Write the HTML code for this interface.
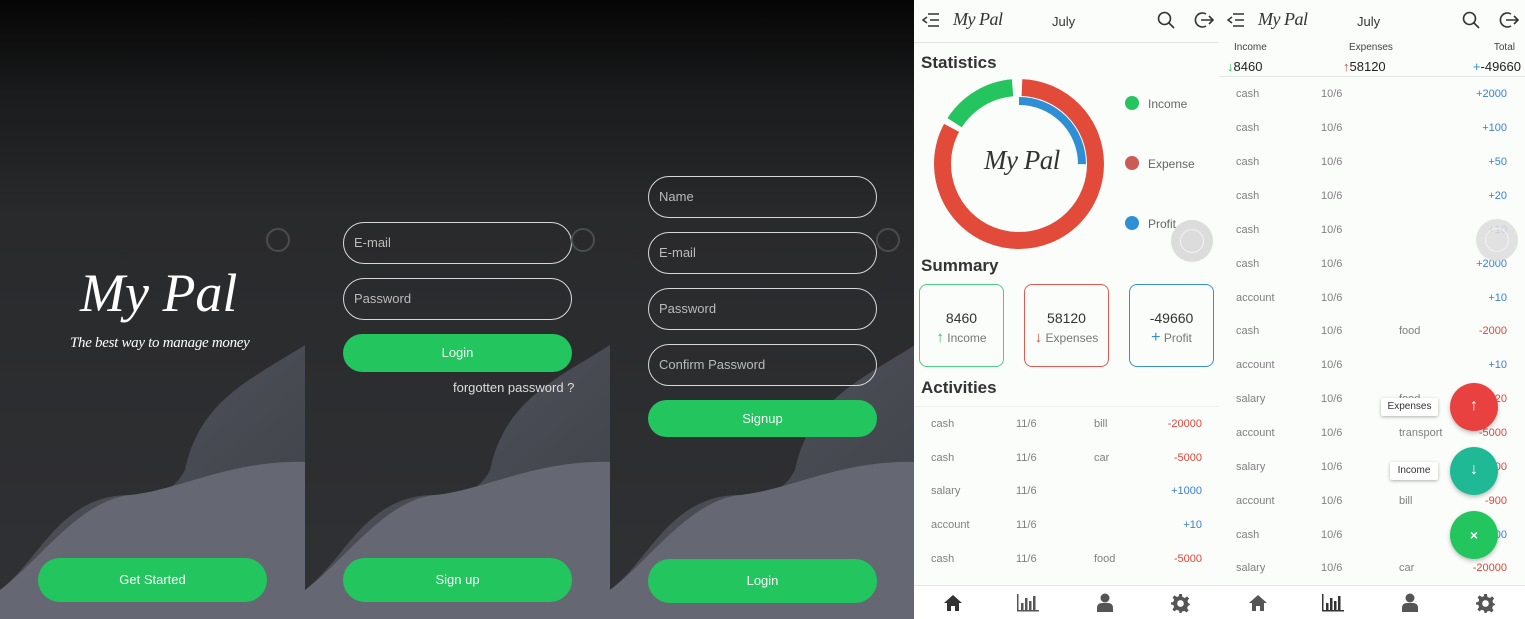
<!DOCTYPE html>
<html><head><meta charset="utf-8"><style>
*{margin:0;padding:0;box-sizing:border-box}
body{width:1525px;height:619px;overflow:hidden;background:#fff;font-family:"Liberation Sans",Roboto,sans-serif;position:relative}
.p{position:absolute;top:0;height:619px;overflow:hidden}
.dark{width:305px;background:linear-gradient(180deg,#050505 0%,#1a1b1c 15%,#292a2c 35%,#303134 100%)}
.a{position:absolute}
.btn{position:absolute;background:#22c55e;border-radius:22px;color:#f3fff6;font-size:13px;text-align:center}
.inp{position:absolute;border:1.5px solid #d8d8d8;border-radius:22px;color:#bbb;font-size:13px;padding-left:10px}
.ring{position:absolute;width:24px;height:24px;border:2px solid #4a4c4f;border-radius:50%}
.script{font-family:"Liberation Serif",serif;font-style:italic}
.light{background:#fafdfa;width:305px}
.t{position:absolute;font-size:11px;color:#808080}
.pos{color:#3b7fd6}.neg{color:#e0453b}
</style></head><body>

<!-- Panel 1 -->
<div class="p dark" style="left:0">
<svg class="a" style="left:0;top:0" width="305" height="619"><defs><linearGradient id="g1" x1="0" y1="0" x2="1" y2="1"><stop offset="0" stop-color="#555862"/><stop offset="1" stop-color="#3c3e44"/></linearGradient></defs><path d="M305 345 C250 380,200 400,185 470 C170 500,140 495,130 495 C60 495,40 560,0 590 L0 619 L305 619Z" fill="url(#g1)"/><path d="M305 462 C230 460,180 490,130 495 C80 500,40 560,0 590 L0 619 L305 619Z" fill="#656872"/></svg>
<div class="a script" style="left:80px;top:262px;font-size:54px;color:#fff">My Pal</div>
<div class="a script" style="left:70px;top:335px;font-size:15px;color:#fff;letter-spacing:-0.3px">The best way to manage money</div>
<div class="ring" style="left:266px;top:228px"></div>
<div class="btn" style="left:38px;top:558px;width:229px;height:44px;line-height:44px">Get Started</div>
</div>

<!-- Panel 2 -->
<div class="p dark" style="left:305px">
<svg class="a" style="left:0;top:0" width="305" height="619"><path d="M305 345 C250 380,200 400,185 470 C170 500,140 495,130 495 C60 495,40 560,0 590 L0 619 L305 619Z" fill="url(#g1)"/><path d="M305 462 C230 460,180 490,130 495 C80 500,40 560,0 590 L0 619 L305 619Z" fill="#656872"/></svg>
<div class="inp" style="left:38px;top:222px;width:229px;height:42px;line-height:40px">E-mail</div>
<div class="inp" style="left:38px;top:278px;width:229px;height:42px;line-height:40px">Password</div>
<div class="btn" style="left:38px;top:334px;width:229px;height:38px;line-height:38px">Login</div>
<div class="a" style="left:148px;top:380px;font-size:13px;color:#ddd">forgotten password ?</div>
<div class="ring" style="left:266px;top:228px"></div>
<div class="btn" style="left:38px;top:558px;width:229px;height:44px;line-height:44px">Sign up</div>
</div>

<!-- Panel 3 -->
<div class="p dark" style="left:610px;width:304px">
<svg class="a" style="left:0;top:0" width="305" height="619"><path d="M305 345 C250 380,200 400,185 470 C170 500,140 495,130 495 C60 495,40 560,0 590 L0 619 L305 619Z" fill="url(#g1)"/><path d="M305 462 C230 460,180 490,130 495 C80 500,40 560,0 590 L0 619 L305 619Z" fill="#656872"/></svg>
<div class="inp" style="left:38px;top:176px;width:229px;height:42px;line-height:40px">Name</div>
<div class="inp" style="left:38px;top:232px;width:229px;height:42px;line-height:40px">E-mail</div>
<div class="inp" style="left:38px;top:288px;width:229px;height:42px;line-height:40px">Password</div>
<div class="inp" style="left:38px;top:344px;width:229px;height:42px;line-height:40px">Confirm Password</div>
<div class="btn" style="left:38px;top:400px;width:229px;height:37px;line-height:37px">Signup</div>
<div class="ring" style="left:266px;top:228px"></div>
<div class="btn" style="left:38px;top:559px;width:229px;height:44px;line-height:44px">Login</div>
</div>

<!-- Panel 4 -->
<div class="p light" style="left:914px">
<svg class="a" style="left:8px;top:12px" width="18" height="16" fill="none" stroke="#333" stroke-width="1.5"><path d="M6 2H17M8 8H17M6 14H17M5 5L1 8L5 11"/></svg>
<div class="a script" style="left:39px;top:9px;font-size:18px;color:#333;letter-spacing:-0.5px">My Pal</div>
<div class="a" style="left:138px;top:14px;font-size:13px;color:#333">July</div>
<svg class="a" style="left:243px;top:11px" width="18" height="18" fill="none" stroke="#333" stroke-width="1.6"><circle cx="7.5" cy="7.5" r="6"/><path d="M12 12L17 17"/></svg>
<svg class="a" style="left:280px;top:11px" width="20" height="18" fill="none" stroke="#333" stroke-width="1.6"><path d="M12 3A7 7 0 1 0 12 15"/><path d="M7 9H19M15 5L19 9L15 13"/></svg>
<div class="a" style="left:0;top:42px;width:305px;height:1px;background:#e3e5e3"></div>
<div class="a" style="left:7px;top:53px;font-size:17px;font-weight:bold;color:#333">Statistics</div>
<svg class="a" style="left:19px;top:78px" width="172" height="172">
<g transform="rotate(-90 86 86)" fill="none">
<circle cx="86" cy="86" r="76.5" stroke="#e24b39" stroke-width="17" stroke-dasharray="395 86" stroke-dashoffset="-3"/>
<circle cx="86" cy="86" r="76.5" stroke="#24c45f" stroke-width="17" stroke-dasharray="70 411" stroke-dashoffset="-404"/>
<circle cx="86" cy="86" r="63" stroke="#2f8fd6" stroke-width="8" stroke-dasharray="99 300"/>
</g></svg>
<div class="a script" style="left:70px;top:145px;font-size:27px;color:#333;letter-spacing:-0.5px">My Pal</div>
<div class="a" style="left:211px;top:96px;width:14px;height:14px;border-radius:50%;background:#24c45f"></div>
<div class="a" style="left:234px;top:97px;font-size:12px;color:#666">Income</div>
<div class="a" style="left:211px;top:156px;width:14px;height:14px;border-radius:50%;background:#cc5a55"></div>
<div class="a" style="left:234px;top:157px;font-size:12px;color:#666">Expense</div>
<div class="a" style="left:211px;top:216px;width:14px;height:14px;border-radius:50%;background:#2f8fd6"></div>
<div class="a" style="left:234px;top:217px;font-size:12px;color:#666">Profit</div>
<div class="a" style="left:257px;top:220px;width:42px;height:42px;border-radius:50%;background:#dcdcdc"></div>
<div class="a" style="left:266px;top:229px;width:24px;height:24px;border-radius:50%;border:1.5px solid #f3f3f3"></div>
<div class="a" style="left:7px;top:256px;font-size:17px;font-weight:bold;color:#333">Summary</div>
<div class="a" style="left:5px;top:284px;width:85px;height:83px;border:1px solid #4ccc85;border-radius:8px;text-align:center"><div style="margin-top:25px;font-size:14px;color:#333">8460</div><div style="font-size:12px;color:#777;margin-top:3px"><span style="color:#24c45f;font-size:15px">↑</span> Income</div></div>
<div class="a" style="left:110px;top:284px;width:85px;height:83px;border:1px solid #e05a50;border-radius:8px;text-align:center"><div style="margin-top:25px;font-size:14px;color:#333">58120</div><div style="font-size:12px;color:#777;margin-top:3px"><span style="color:#e24b39;font-size:15px">↓</span> Expenses</div></div>
<div class="a" style="left:215px;top:284px;width:85px;height:83px;border:1px solid #3a8fd0;border-radius:8px;text-align:center"><div style="margin-top:25px;font-size:14px;color:#333">-49660</div><div style="font-size:12px;color:#777;margin-top:3px"><span style="color:#2f8fd6;font-size:16px">+</span> Profit</div></div>
<div class="a" style="left:7px;top:378px;font-size:17px;font-weight:bold;color:#333">Activities</div>
<div class="a" style="left:0;top:406px;width:305px;height:1px;background:#eee"></div>
<div class="t" style="left:17px;top:418px">cash</div><div class="t" style="left:102px;top:418px">11/6</div><div class="t" style="left:180px;top:418px">bill</div><div class="t neg" style="right:17px;top:418px">-20000</div>
<div class="t" style="left:17px;top:452px">cash</div><div class="t" style="left:102px;top:452px">11/6</div><div class="t" style="left:180px;top:452px">car</div><div class="t neg" style="right:17px;top:452px">-5000</div>
<div class="t" style="left:17px;top:485px">salary</div><div class="t" style="left:102px;top:485px">11/6</div><div class="t pos" style="right:17px;top:485px">+1000</div>
<div class="t" style="left:17px;top:519px">account</div><div class="t" style="left:102px;top:519px">11/6</div><div class="t pos" style="right:17px;top:519px">+10</div>
<div class="t" style="left:17px;top:553px">cash</div><div class="t" style="left:102px;top:553px">11/6</div><div class="t" style="left:180px;top:553px">food</div><div class="t neg" style="right:17px;top:553px">-5000</div>
<div class="a" style="left:0;top:585px;width:305px;height:34px;background:#fff;border-top:1px solid #e5e5e5"></div>
<svg class="a" style="left:29px;top:594px" width="20" height="18" fill="#333"><path d="M10 1L1 9H4V17H8V12H12V17H16V9H19Z"/></svg>
<svg class="a" style="left:103px;top:594px" width="22" height="18" fill="#555"><rect x="0" y="0" width="1.5" height="17"/><rect x="0" y="16" width="22" height="1.5"/><rect x="4" y="9" width="2.5" height="7"/><rect x="8" y="4" width="2.5" height="12"/><rect x="12" y="7" width="2.5" height="9"/><rect x="16" y="2" width="2.5" height="14"/></svg>
<svg class="a" style="left:183px;top:593px" width="16" height="20" fill="#555"><circle cx="8" cy="5" r="4.5"/><path d="M0 19V15Q0 10 5 10H11Q16 10 16 15V19Z"/></svg>
<svg class="a" style="left:257px;top:594px" width="19" height="19" viewBox="0 0 20 20" fill="#555"><path d="M8.5 0H11.5L12 3L14.5 4.2L17 2.5L19 4.8L17.3 7.2L18 9.5L20 10.5V11.5L17.8 12.5L17 15L18.5 17.3L16.5 19.3L14 17.7L11.5 18.6L11 20H9L8.5 17.6L6 16.6L3.5 18.3L1.5 16.3L3.2 13.8L2.4 11.5L0 11V9L2.5 8.3L3.3 6L1.7 3.5L3.7 1.5L6.2 3.2L8.3 2.4Z"/><circle cx="10" cy="10" r="3.5" fill="#fff"/></svg>
</div>

<!-- Panel 5 -->
<div class="p light" style="left:1219px;width:306px">
<svg class="a" style="left:8px;top:12px" width="18" height="16" fill="none" stroke="#333" stroke-width="1.5"><path d="M6 2H17M8 8H17M6 14H17M5 5L1 8L5 11"/></svg>
<div class="a script" style="left:39px;top:9px;font-size:18px;color:#333;letter-spacing:-0.5px">My Pal</div>
<div class="a" style="left:138px;top:14px;font-size:13px;color:#333">July</div>
<svg class="a" style="left:243px;top:11px" width="18" height="18" fill="none" stroke="#333" stroke-width="1.6"><circle cx="7.5" cy="7.5" r="6"/><path d="M12 12L17 17"/></svg>
<svg class="a" style="left:280px;top:11px" width="20" height="18" fill="none" stroke="#333" stroke-width="1.6"><path d="M12 3A7 7 0 1 0 12 15"/><path d="M7 9H19M15 5L19 9L15 13"/></svg>
<div class="a" style="left:15px;top:42px;font-size:10px;color:#444">Income</div>
<div class="a" style="left:130px;top:42px;font-size:10px;color:#444">Expenses</div>
<div class="a" style="right:10px;top:42px;font-size:10px;color:#444">Total</div>
<div class="a" style="left:8px;top:59px;font-size:13px;color:#222"><span style="color:#24c45f">↓</span>8460</div>
<div class="a" style="left:124px;top:59px;font-size:13px;color:#222"><span style="color:#e24b39">↑</span>58120</div>
<div class="a" style="right:4px;top:59px;font-size:13px;color:#222"><span style="color:#2f8fd6">+</span>-49660</div>
<div class="a" style="left:0;top:76px;width:306px;height:1px;background:#e3e5e3"></div>
<div class="t" style="left:17px;top:88px">cash</div><div class="t" style="left:102px;top:88px">10/6</div><div class="t pos" style="right:18px;top:88px">+2000</div>
<div class="t" style="left:17px;top:122px">cash</div><div class="t" style="left:102px;top:122px">10/6</div><div class="t pos" style="right:18px;top:122px">+100</div>
<div class="t" style="left:17px;top:156px">cash</div><div class="t" style="left:102px;top:156px">10/6</div><div class="t pos" style="right:18px;top:156px">+50</div>
<div class="t" style="left:17px;top:190px">cash</div><div class="t" style="left:102px;top:190px">10/6</div><div class="t pos" style="right:18px;top:190px">+20</div>
<div class="t" style="left:17px;top:224px">cash</div><div class="t" style="left:102px;top:224px">10/6</div><div class="t pos" style="right:18px;top:224px">+10</div>
<div class="t" style="left:17px;top:258px">cash</div><div class="t" style="left:102px;top:258px">10/6</div><div class="t pos" style="right:18px;top:258px">+2000</div>
<div class="t" style="left:17px;top:292px">account</div><div class="t" style="left:102px;top:292px">10/6</div><div class="t pos" style="right:18px;top:292px">+10</div>
<div class="t" style="left:17px;top:325px">cash</div><div class="t" style="left:102px;top:325px">10/6</div><div class="t" style="left:180px;top:325px">food</div><div class="t neg" style="right:18px;top:325px">-2000</div>
<div class="t" style="left:17px;top:359px">account</div><div class="t" style="left:102px;top:359px">10/6</div><div class="t pos" style="right:18px;top:359px">+10</div>
<div class="t" style="left:17px;top:393px">salary</div><div class="t" style="left:102px;top:393px">10/6</div><div class="t" style="left:180px;top:393px">food</div><div class="t neg" style="right:18px;top:393px">-2020</div>
<div class="t" style="left:17px;top:427px">account</div><div class="t" style="left:102px;top:427px">10/6</div><div class="t" style="left:180px;top:427px">transport</div><div class="t neg" style="right:18px;top:427px">-5000</div>
<div class="t" style="left:17px;top:461px">salary</div><div class="t" style="left:102px;top:461px">10/6</div><div class="t neg" style="right:18px;top:461px">-1000</div>
<div class="t" style="left:17px;top:495px">account</div><div class="t" style="left:102px;top:495px">10/6</div><div class="t" style="left:180px;top:495px">bill</div><div class="t neg" style="right:18px;top:495px">-900</div>
<div class="t" style="left:17px;top:529px">cash</div><div class="t" style="left:102px;top:529px">10/6</div><div class="t pos" style="right:18px;top:529px">+100</div>
<div class="t" style="left:17px;top:562px">salary</div><div class="t" style="left:102px;top:562px">10/6</div><div class="t" style="left:180px;top:562px">car</div><div class="t neg" style="right:18px;top:562px">-20000</div>
<div class="a" style="left:257px;top:219px;width:42px;height:42px;border-radius:50%;background:#dcdcdc;opacity:.85"></div>
<div class="a" style="left:266px;top:228px;width:24px;height:24px;border-radius:50%;border:1.5px solid #f3f3f3"></div>
<div class="a" style="left:162px;top:398px;width:57px;height:18px;background:#fff;box-shadow:0 1px 3px rgba(0,0,0,.3);border-radius:2px;font-size:10px;color:#333;text-align:center;line-height:18px">Expenses</div>
<div class="a" style="left:231px;top:383px;width:48px;height:48px;border-radius:50%;background:#e94040;box-shadow:0 2px 4px rgba(0,0,0,.25);color:#fff;text-align:center;line-height:46px;font-size:16px">↑</div>
<div class="a" style="left:171px;top:462px;width:48px;height:18px;background:#fff;box-shadow:0 1px 3px rgba(0,0,0,.3);border-radius:2px;font-size:10px;color:#333;text-align:center;line-height:18px">Income</div>
<div class="a" style="left:231px;top:447px;width:48px;height:48px;border-radius:50%;background:#1fb996;box-shadow:0 2px 4px rgba(0,0,0,.25);color:#fff;text-align:center;line-height:46px;font-size:16px">↓</div>
<div class="a" style="left:231px;top:511px;width:48px;height:48px;border-radius:50%;background:#22c55e;box-shadow:0 2px 4px rgba(0,0,0,.25);color:#fff;text-align:center;line-height:48px;font-size:14px;font-weight:bold">×</div>
<div class="a" style="left:0;top:585px;width:306px;height:34px;background:#fff;border-top:1px solid #e5e5e5"></div>
<svg class="a" style="left:29px;top:594px" width="20" height="18" fill="#555"><path d="M10 1L1 9H4V17H8V12H12V17H16V9H19Z"/></svg>
<svg class="a" style="left:103px;top:594px" width="22" height="18" fill="#333"><rect x="0" y="0" width="1.5" height="17"/><rect x="0" y="16" width="22" height="1.5"/><rect x="4" y="9" width="2.5" height="7"/><rect x="8" y="4" width="2.5" height="12"/><rect x="12" y="7" width="2.5" height="9"/><rect x="16" y="2" width="2.5" height="14"/></svg>
<svg class="a" style="left:183px;top:593px" width="16" height="20" fill="#555"><circle cx="8" cy="5" r="4.5"/><path d="M0 19V15Q0 10 5 10H11Q16 10 16 15V19Z"/></svg>
<svg class="a" style="left:257px;top:594px" width="19" height="19" viewBox="0 0 20 20" fill="#555"><path d="M8.5 0H11.5L12 3L14.5 4.2L17 2.5L19 4.8L17.3 7.2L18 9.5L20 10.5V11.5L17.8 12.5L17 15L18.5 17.3L16.5 19.3L14 17.7L11.5 18.6L11 20H9L8.5 17.6L6 16.6L3.5 18.3L1.5 16.3L3.2 13.8L2.4 11.5L0 11V9L2.5 8.3L3.3 6L1.7 3.5L3.7 1.5L6.2 3.2L8.3 2.4Z"/><circle cx="10" cy="10" r="3.5" fill="#fff"/></svg>
</div>
</body></html>
